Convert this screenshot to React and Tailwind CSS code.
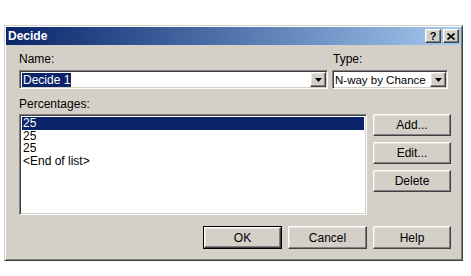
import React from "react";

const raised =
  "border border-t-white border-l-white border-r-[#404040] border-b-[#404040] shadow-[inset_-1px_-1px_0_#808080,inset_1px_1px_0_#e6e3de]";
const sunken =
  "border border-t-[#808080] border-l-[#808080] border-r-white border-b-white shadow-[inset_1px_1px_0_#404040,inset_-1px_-1px_0_#d4d0c8]";

function DropArrow() {
  return (
    <div className={`w-[16px] h-[15px] shrink-0 bg-[#d4d0c8] flex items-center justify-center ${raised}`}>
      <svg width="7" height="4" viewBox="0 0 7 4">
        <path d="M0 0h7L3.5 4z" fill="#000" />
      </svg>
    </div>
  );
}

function Button({ label, isDefault = false, className = "" }) {
  const inner = (
    <div
      className={`h-full w-full bg-[#d4d0c8] flex items-center justify-center text-[12px] text-black ${raised}`}
    >
      {label}
    </div>
  );
  if (isDefault) {
    return <div className={`border border-black ${className}`}>{inner}</div>;
  }
  return <div className={className}>{inner}</div>;
}

export default function App() {
  const items = ["25", "25", "25", "<End of list>"];

  return (
    <div
      className="w-[471px] h-[276px] bg-white pt-[25px] pl-[4px]"
      style={{ fontFamily: '"Liberation Sans", Arial, sans-serif' }}
    >
      <div className="w-[459px] h-[236px] bg-[#d4d0c8] border border-t-[#d4d0c8] border-l-[#d4d0c8] border-r-[#404040] border-b-[#404040] shadow-[inset_1px_1px_0_white,inset_-1px_-1px_0_#808080] p-[1px] flex flex-col">
        {/* Title bar */}
        <div className="h-[18px] bg-gradient-to-r from-[#0a246a] to-[#a6caf0] flex items-center justify-between pl-[2px] pr-[2px]">
          <span className="text-white font-bold text-[12px] leading-none">Decide</span>
          <div className="flex gap-[2px]">
            <div className={`w-[16px] h-[14px] bg-[#d4d0c8] flex items-center justify-center text-[11px] font-bold leading-none ${raised}`}>
              ?
            </div>
            <div className={`w-[16px] h-[14px] bg-[#d4d0c8] flex items-center justify-center ${raised}`}>
              <svg width="8" height="7" viewBox="0 0 8 7">
                <path d="M0.5 0.5l7 6M7.5 0.5l-7 6" stroke="#000" strokeWidth="1.6" />
              </svg>
            </div>
          </div>
        </div>

        {/* Body */}
        <div className="flex-1 pl-[13px] pr-[10px] text-[12px] text-black">
          {/* Name / Type */}
          <div className="flex gap-[4px] mt-[7px]">
            <div className="w-[309px]">
              <div className="h-[15px] leading-[15px]">Name:</div>
              <div className={`mt-[3px] h-[19px] bg-white flex items-center pl-[2px] pr-[1px] ${sunken}`}>
                <span className="bg-[#0a246a] text-white leading-[14px] px-[1px] whitespace-nowrap">Decide 1</span>
                <div className="flex-1" />
                <DropArrow />
              </div>
            </div>
            <div className="w-[116px]">
              <div className="h-[15px] leading-[15px] pl-[1px]">Type:</div>
              <div className={`mt-[3px] h-[19px] bg-white flex items-center pl-[2px] pr-[1px] ${sunken}`}>
                <span className="leading-[14px] whitespace-nowrap text-[11.5px]">N-way by Chance</span>
                <div className="flex-1" />
                <DropArrow />
              </div>
            </div>
          </div>

          {/* Percentages */}
          <div className="mt-[8px] h-[15px] leading-[15px]">Percentages:</div>
          <div className="flex mt-[2px]">
            <div className={`w-[348px] h-[101px] bg-white pt-[2px] pl-[2px] pr-[2px] ${sunken}`}>
              {items.map((item, i) => (
                <div
                  key={i}
                  className={`h-[12.5px] leading-[12.5px] pl-[1px] ${i === 0 ? "bg-[#0a246a] text-white" : ""}`}
                >
                  {item}
                </div>
              ))}
            </div>
            <div className="flex flex-col gap-[6px] ml-[6px]">
              <Button label="Add..." className="w-[78px] h-[22px]" />
              <Button label="Edit..." className="w-[78px] h-[22px]" />
              <Button label="Delete" className="w-[78px] h-[22px]" />
            </div>
          </div>

          {/* Bottom buttons */}
          <div className="flex justify-end gap-[6px] mt-[11px]">
            <Button label="OK" isDefault className="w-[79px] h-[23px]" />
            <Button label="Cancel" className="w-[79px] h-[23px]" />
            <Button label="Help" className="w-[78px] h-[23px]" />
          </div>
        </div>
      </div>
    </div>
  );
}
